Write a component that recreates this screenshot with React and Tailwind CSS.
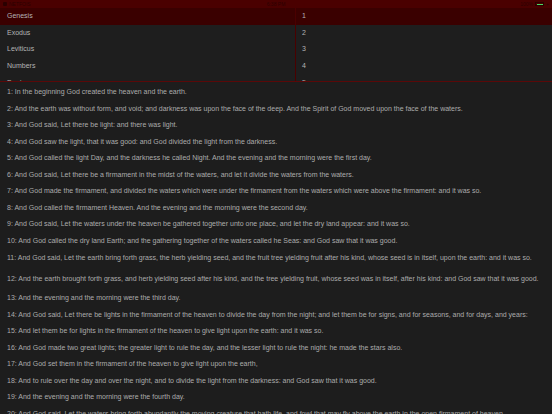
const books = ['Genesis', 'Exodus', 'Leviticus', 'Numbers', 'Deuteronomy'];

const verses = [
  'In the beginning God created the heaven and the earth.',
  'And the earth was without form, and void; and darkness was upon the face of the deep. And the Spirit of God moved upon the face of the waters.',
  'And God said, Let there be light: and there was light.',
  'And God saw the light, that it was good: and God divided the light from the darkness.',
  'And God called the light Day, and the darkness he called Night. And the evening and the morning were the first day.',
  'And God said, Let there be a firmament in the midst of the waters, and let it divide the waters from the waters.',
  'And God made the firmament, and divided the waters which were under the firmament from the waters which were above the firmament: and it was so.',
  'And God called the firmament Heaven. And the evening and the morning were the second day.',
  'And God said, Let the waters under the heaven be gathered together unto one place, and let the dry land appear: and it was so.',
  'And God called the dry land Earth; and the gathering together of the waters called he Seas: and God saw that it was good.',
  'And God said, Let the earth bring forth grass, the herb yielding seed, and the fruit tree yielding fruit after his kind, whose seed is in itself, upon the earth: and it was so.',
  'And the earth brought forth grass, and herb yielding seed after his kind, and the tree yielding fruit, whose seed was in itself, after his kind: and God saw that it was good.',
  'And the evening and the morning were the third day.',
  'And God said, Let there be lights in the firmament of the heaven to divide the day from the night; and let them be for signs, and for seasons, and for days, and years:',
  'And let them be for lights in the firmament of the heaven to give light upon the earth: and it was so.',
  'And God made two great lights; the greater light to rule the day, and the lesser light to rule the night: he made the stars also.',
  'And God set them in the firmament of the heaven to give light upon the earth,',
  'And to rule over the day and over the night, and to divide the light from the darkness: and God saw that it was good.',
  'And the evening and the morning were the fourth day.',
  'And God said, Let the waters bring forth abundantly the moving creature that hath life, and fowl that may fly above the earth in the open firmament of heaven.',
];

function StatusBar() {
  return (
    <div className="h-[8px] bg-[#4a0000] flex items-center justify-between px-[3px] text-[5px] leading-none text-[#2a0000] relative">
      <div className="flex items-center gap-[2px]">
        <span className="w-[4px] h-[4px] bg-[#2a0000] rounded-[1px]" />
        <span>NETFOIS</span>
      </div>
      <span className="absolute left-1/2 -translate-x-1/2">6:38 PM</span>
      <div className="flex items-center gap-[2px]">
        <span>100%</span>
        <span className="w-[9px] h-[4px] border-[0.5px] border-[#2a0000] p-[0.5px] flex">
          <span className="flex-1 bg-[#4cd964]" />
        </span>
        <span>+</span>
      </div>
    </div>
  );
}

export default function App() {
  return (
    <div
      className="w-[552px] h-[414px] overflow-hidden bg-[#1d1d1d] flex flex-col"
      style={{ fontFamily: '"Liberation Sans", Arial, sans-serif' }}
    >
      <StatusBar />
      <div className="h-[74px] overflow-hidden border-b border-[#5a0808] shrink-0">
        {books.map((b, i) => (
          <div
            key={b}
            className={`h-[16.67px] flex items-center text-[7px] text-[#b4b4b4] ${
              i === 0 ? 'bg-[#3a0000]' : 'bg-[#1e1e1e]'
            }`}
          >
            <div className="w-[296px] pl-[7px] h-full flex items-center border-r border-[#4a0000]">{b}</div>
            <div className="pl-[6px]">{i + 1}</div>
          </div>
        ))}
      </div>
      <div className="flex-1 overflow-hidden pt-[2px]">
        {verses.map((v, i) => (
          <div
            key={i}
            className={`px-[7px] text-[7px] text-[#acacac] whitespace-nowrap ${
              i === 10 || i === 11 ? 'h-[20.5px] pt-[4.3px]' : 'h-[16.5px] flex items-center'
            }`}
          >
            {i + 1}: {v}
          </div>
        ))}
      </div>
    </div>
  );
}
